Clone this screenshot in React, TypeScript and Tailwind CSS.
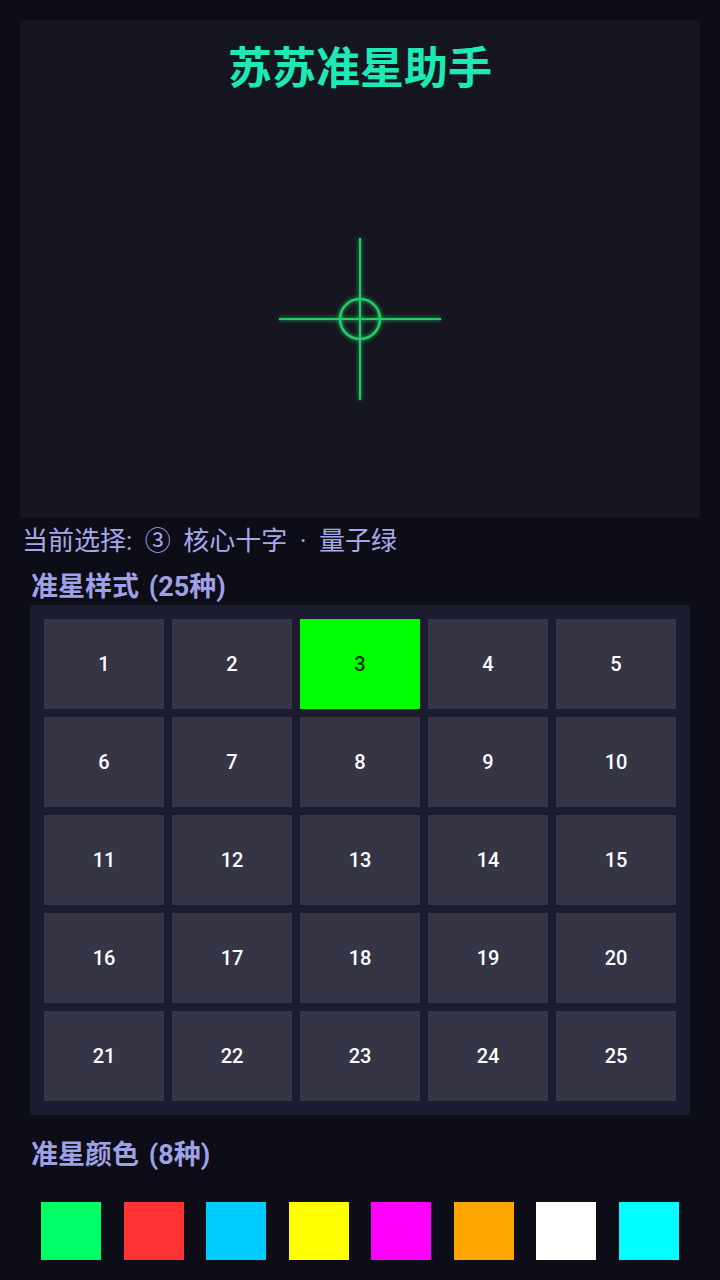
import React, { useState } from 'react';

const colors = ['#00ff66', '#ff3333', '#00ccff', '#ffff00', '#ff00ff', '#ffa500', '#ffffff', '#00ffff'];

// Crosshair drawing for the preview area
const Crosshair: React.FC<{ color: string }> = ({ color }) => (
    <svg width="170" height="170" viewBox="0 0 170 170" style={{ filter: `drop-shadow(0 0 2px ${color})` }}>
        <line x1="4" y1="85" x2="166" y2="85" stroke={color} strokeWidth="2" />
        <line x1="85" y1="4" x2="85" y2="166" stroke={color} strokeWidth="2" />
        <circle cx="85" cy="85" r="20" fill="none" stroke={color} strokeWidth="2.5" />
    </svg>
);

const App: React.FC = () => {
    const [style, setStyle] = useState(3);
    const [color, setColor] = useState(0);

    return (
        <div
            className="min-h-[1280px] w-full bg-[#0c0d16] pt-5"
            style={{ fontFamily: 'Roboto, "Noto Sans CJK SC", sans-serif' }}
        >
            {/* Preview */}
            <div className="mx-5 h-[498px] bg-[#151620] flex flex-col">
                <div className="h-[100px] flex justify-center pt-[21px]">
                    <h1 className="text-[44px] leading-[57px] font-bold text-[#1de9b6]">苏苏准星助手</h1>
                </div>
                <div className="flex-1 flex items-center justify-center">
                    <Crosshair color="#22cc66" />
                </div>
            </div>

            <p className="mt-[3px] pl-[22px] text-[26px] leading-[36px] text-[#a7a8ea] [word-spacing:6px]">
                当前选择: <span className="font-['Noto_Sans_CJK_SC']">③</span> 核心十字 · 量子绿
            </p>

            <h2 className="mt-[11px] pl-[31px] text-[27px] leading-[35px] font-bold text-[#9fa0e6] [word-spacing:3px]">准星样式 (25种)</h2>

            {/* Style grid */}
            <div className="mx-[30px] bg-[#1b1c30] p-[14px] grid grid-cols-5 gap-2">
                {Array.from({ length: 25 }, (_, i) => i + 1).map((n) => (
                    <button
                        key={n}
                        onClick={() => setStyle(n)}
                        className={
                            n === style
                                ? 'h-[90px] bg-[#00ff00] text-[#0f2f12] text-[20px] font-medium flex items-center justify-center'
                                : 'h-[90px] bg-[#353545] text-white text-[20px] font-medium flex items-center justify-center'
                        }
                    >
                        {n}
                    </button>
                ))}
            </div>

            <h2 className="mt-[23px] pl-[31px] text-[27px] leading-[35px] font-bold text-[#9fa0e6] [word-spacing:3px]">准星颜色 (8种)</h2>

            {/* Color swatches */}
            <div className="mx-[30px] mt-[29px] grid grid-cols-8 justify-items-center">
                {colors.map((c, i) => (
                    <button
                        key={c}
                        onClick={() => setColor(i)}
                        className={i === color ? 'w-[60px] h-[58px]' : 'w-[60px] h-[58px]'}
                        style={{ backgroundColor: c }}
                    />
                ))}
            </div>
        </div>
    );
};

export default App;
